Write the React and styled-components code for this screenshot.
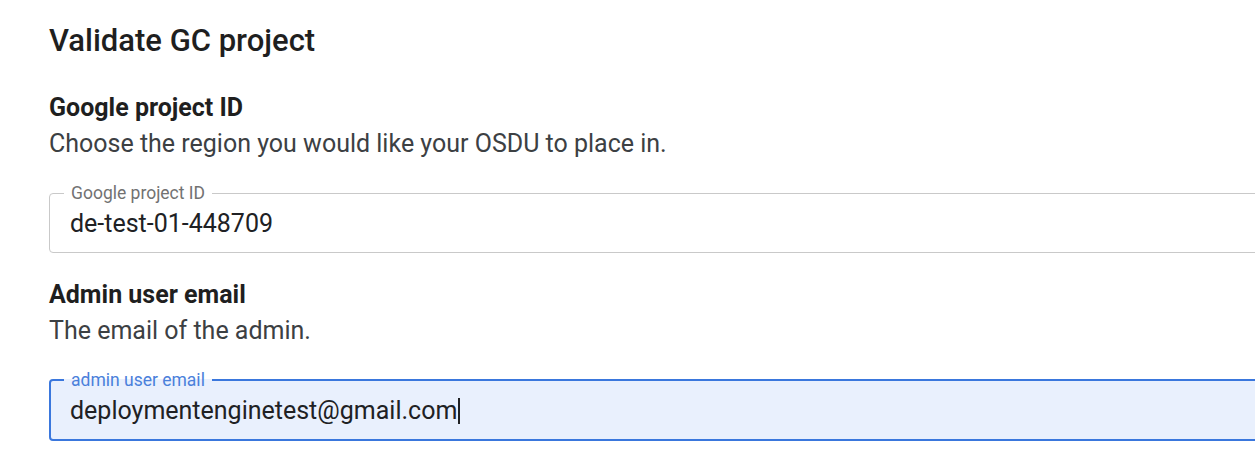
import { createGlobalStyle, styled } from "styled-components";

const GlobalStyle = createGlobalStyle`
    html, body {
        margin: 0;
        background: #fff;
        overflow: hidden;
    }
    body {
        font-family: Roboto, "Liberation Sans", sans-serif;
        color: #202124;
    }
`;

const Page = styled.div`
    padding: 21px 0 0 49px;
    width: 1260px;
`;

const Title = styled.h1`
    font-size: 31px;
    font-weight: 500;
    line-height: 40px;
    margin: 0 0 32px;
    color: #1f1f1f;
`;

const Section = styled.section`
    margin-bottom: 27px;
`;

const Heading = styled.h2`
    font-size: 25px;
    font-weight: 700;
    line-height: 30px;
    margin: 0;
    color: #1f1f1f;
`;

const Hint = styled.p`
    font-size: 25px;
    line-height: 30px;
    margin: 6px 0 24px;
    color: #3c4043;
`;

const Field = styled.fieldset`
    margin: 0;
    padding: 0 12px 13px ${p => (p.$focused ? "19px" : "20px")};
    border: ${p => (p.$focused ? "2.5px solid #3a77dd" : "1.5px solid #c9c9c9")};
    border-radius: 4px;
    background: ${p => (p.$focused ? "#e9f0fd" : "#fff")};
    min-width: 0;
`;

const Legend = styled.legend`
    font-size: 17.5px;
    line-height: 20px;
    padding: 0 7px;
    margin-left: -6px;
    color: ${p => (p.$focused ? "#4a80db" : "#727272")};
`;

const Value = styled.div`
    font-size: 25px;
    line-height: 30px;
    padding-top: 6px;
    color: #202124;
    display: flex;
    align-items: center;
`;

const Caret = styled.span`
    display: inline-block;
    width: 2px;
    height: 26px;
    background: #202124;
    margin-left: 1px;
`;

function TextField({ label, value, focused }) {
    return (
        <Field $focused={focused}>
            <Legend $focused={focused}>{label}</Legend>
            <Value>
                {value}
                {focused && <Caret />}
            </Value>
        </Field>
    );
}

export default function App() {
    return (
        <>
            <GlobalStyle />
            <Page>
                <Title>Validate GC project</Title>
                <Section>
                    <Heading>Google project ID</Heading>
                    <Hint>Choose the region you would like your OSDU to place in.</Hint>
                    <TextField label="Google project ID" value="de-test-01-448709" />
                </Section>
                <Section>
                    <Heading>Admin user email</Heading>
                    <Hint>The email of the admin.</Hint>
                    <TextField label="admin user email" value="deploymentenginetest@gmail.com" focused />
                </Section>
            </Page>
        </>
    );
}
